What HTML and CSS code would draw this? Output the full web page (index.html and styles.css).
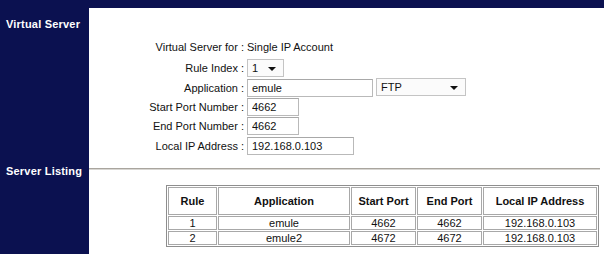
FILE: index.html
```html
<!DOCTYPE html>
<html lang="en">
<head>
    <meta charset="UTF-8">
    <title>Virtual Server</title>
    <link rel="stylesheet" href="styles.css">
</head>
<body>
<div class="frame">
    <div class="section section-top">
        <div class="side"><h2>Virtual Server</h2></div>
        <div class="main">
            <div class="form">
                <label>Virtual Server for :</label>
                <span class="value">Single IP Account</span>

                <label>Rule Index :</label>
                <span class="sel sel-rule">1</span>

                <label>Application :</label>
                <span class="pair">
                    <input class="field w-app" type="text" value="emule">
                    <span class="sel sel-app">FTP</span>
                </span>

                <label>Start Port Number :</label>
                <input class="field w-port" type="text" value="4662">

                <label>End Port Number :</label>
                <input class="field w-port" type="text" value="4662">

                <label>Local IP Address :</label>
                <input class="field w-ip" type="text" value="192.168.0.103">
            </div>
        </div>
    </div>

    <div class="section section-list">
        <div class="side"><h2>Server Listing</h2></div>
        <div class="main">
            <div class="rule"></div>
            <table class="listing">
                <tr>
                    <th class="c-rule">Rule</th>
                    <th class="c-app">Application</th>
                    <th class="c-port">Start Port</th>
                    <th class="c-port">End Port</th>
                    <th class="c-ip">Local IP Address</th>
                </tr>
                <tr>
                    <td>1</td>
                    <td>emule</td>
                    <td>4662</td>
                    <td>4662</td>
                    <td>192.168.0.103</td>
                </tr>
                <tr>
                    <td>2</td>
                    <td>emule2</td>
                    <td>4672</td>
                    <td>4672</td>
                    <td>192.168.0.103</td>
                </tr>
            </table>
        </div>
    </div>
</div>
</body>
</html>
```

FILE: styles.css
```css
body {
    margin: 0;
    font-family: "Liberation Sans", Arial, sans-serif;
    font-size: 11px;
    color: #111;
    background: #fff;
}

.frame {
    width: 604px;
    padding-top: 8px;
    background: #0b1150;
}

.section {
    display: flex;
}

.side {
    width: 89px;
    flex-shrink: 0;
    background: #0b1150;
}

.side h2 {
    margin: 0;
    padding-left: 6px;
    color: #fff;
    font-size: 11px;
    font-weight: bold;
    letter-spacing: 0.2px;
}

.main {
    flex: 1;
    background: #fff;
}

.section-top .side h2 {
    padding-top: 10px;
}

.section-top .main {
    height: 155px;
}

.form {
    display: grid;
    grid-template-columns: 155px auto;
    grid-template-rows: 20px 21px 19px 19px 20px 20px;
    column-gap: 3px;
    align-items: center;
    padding-top: 29px;
}

.form label {
    text-align: right;
    white-space: nowrap;
}

.pair {
    display: flex;
    gap: 3px;
}

.field {
    box-sizing: border-box;
    height: 18px;
    margin: 0;
    padding: 0 4px;
    border: 1px solid #b9b9b9;
    border-top-color: #a8a8a8;
    font-family: inherit;
    font-size: 11px;
    color: #111;
}

.w-app { width: 126px; }
.w-port { width: 52px; }
.w-ip { width: 107px; }

.sel {
    position: relative;
    box-sizing: border-box;
    display: inline-block;
    height: 18px;
    line-height: 16px;
    padding-left: 4px;
    border: 1px solid #c4c4c4;
    background: #fbfbfb;
}

.sel::after {
    content: "";
    position: absolute;
    right: 7px;
    top: 7px;
    border-left: 4px solid transparent;
    border-right: 4px solid transparent;
    border-top: 4px solid #111;
}

.sel-rule { width: 37px; }
.sel-app { width: 90px; margin-top: -1px; }

.section-list .side {
    height: 91px;
}

.section-list .side h2 {
    padding-top: 2px;
}

.rule {
    height: 0;
    margin-top: 5px;
    border-top: 1px solid #a9a59e;
    border-bottom: 1px solid #d8d6d2;
    margin-right: 4px;
}

.listing {
    margin: 15px 0 0 77px;
    border: 1px solid #8e8e8e;
    border-spacing: 1px;
    font-size: 11px;
}

.listing th,
.listing td {
    border: 1px solid #a8a8a8;
    text-align: center;
    padding: 0;
}

.listing th {
    height: 26px;
    font-weight: bold;
}

.listing td {
    height: 12px;
    line-height: 12px;
}

.c-rule { width: 47px; }
.c-app { width: 130px; }
.c-port { width: 63px; }
.c-ip { width: 112px; }
```
